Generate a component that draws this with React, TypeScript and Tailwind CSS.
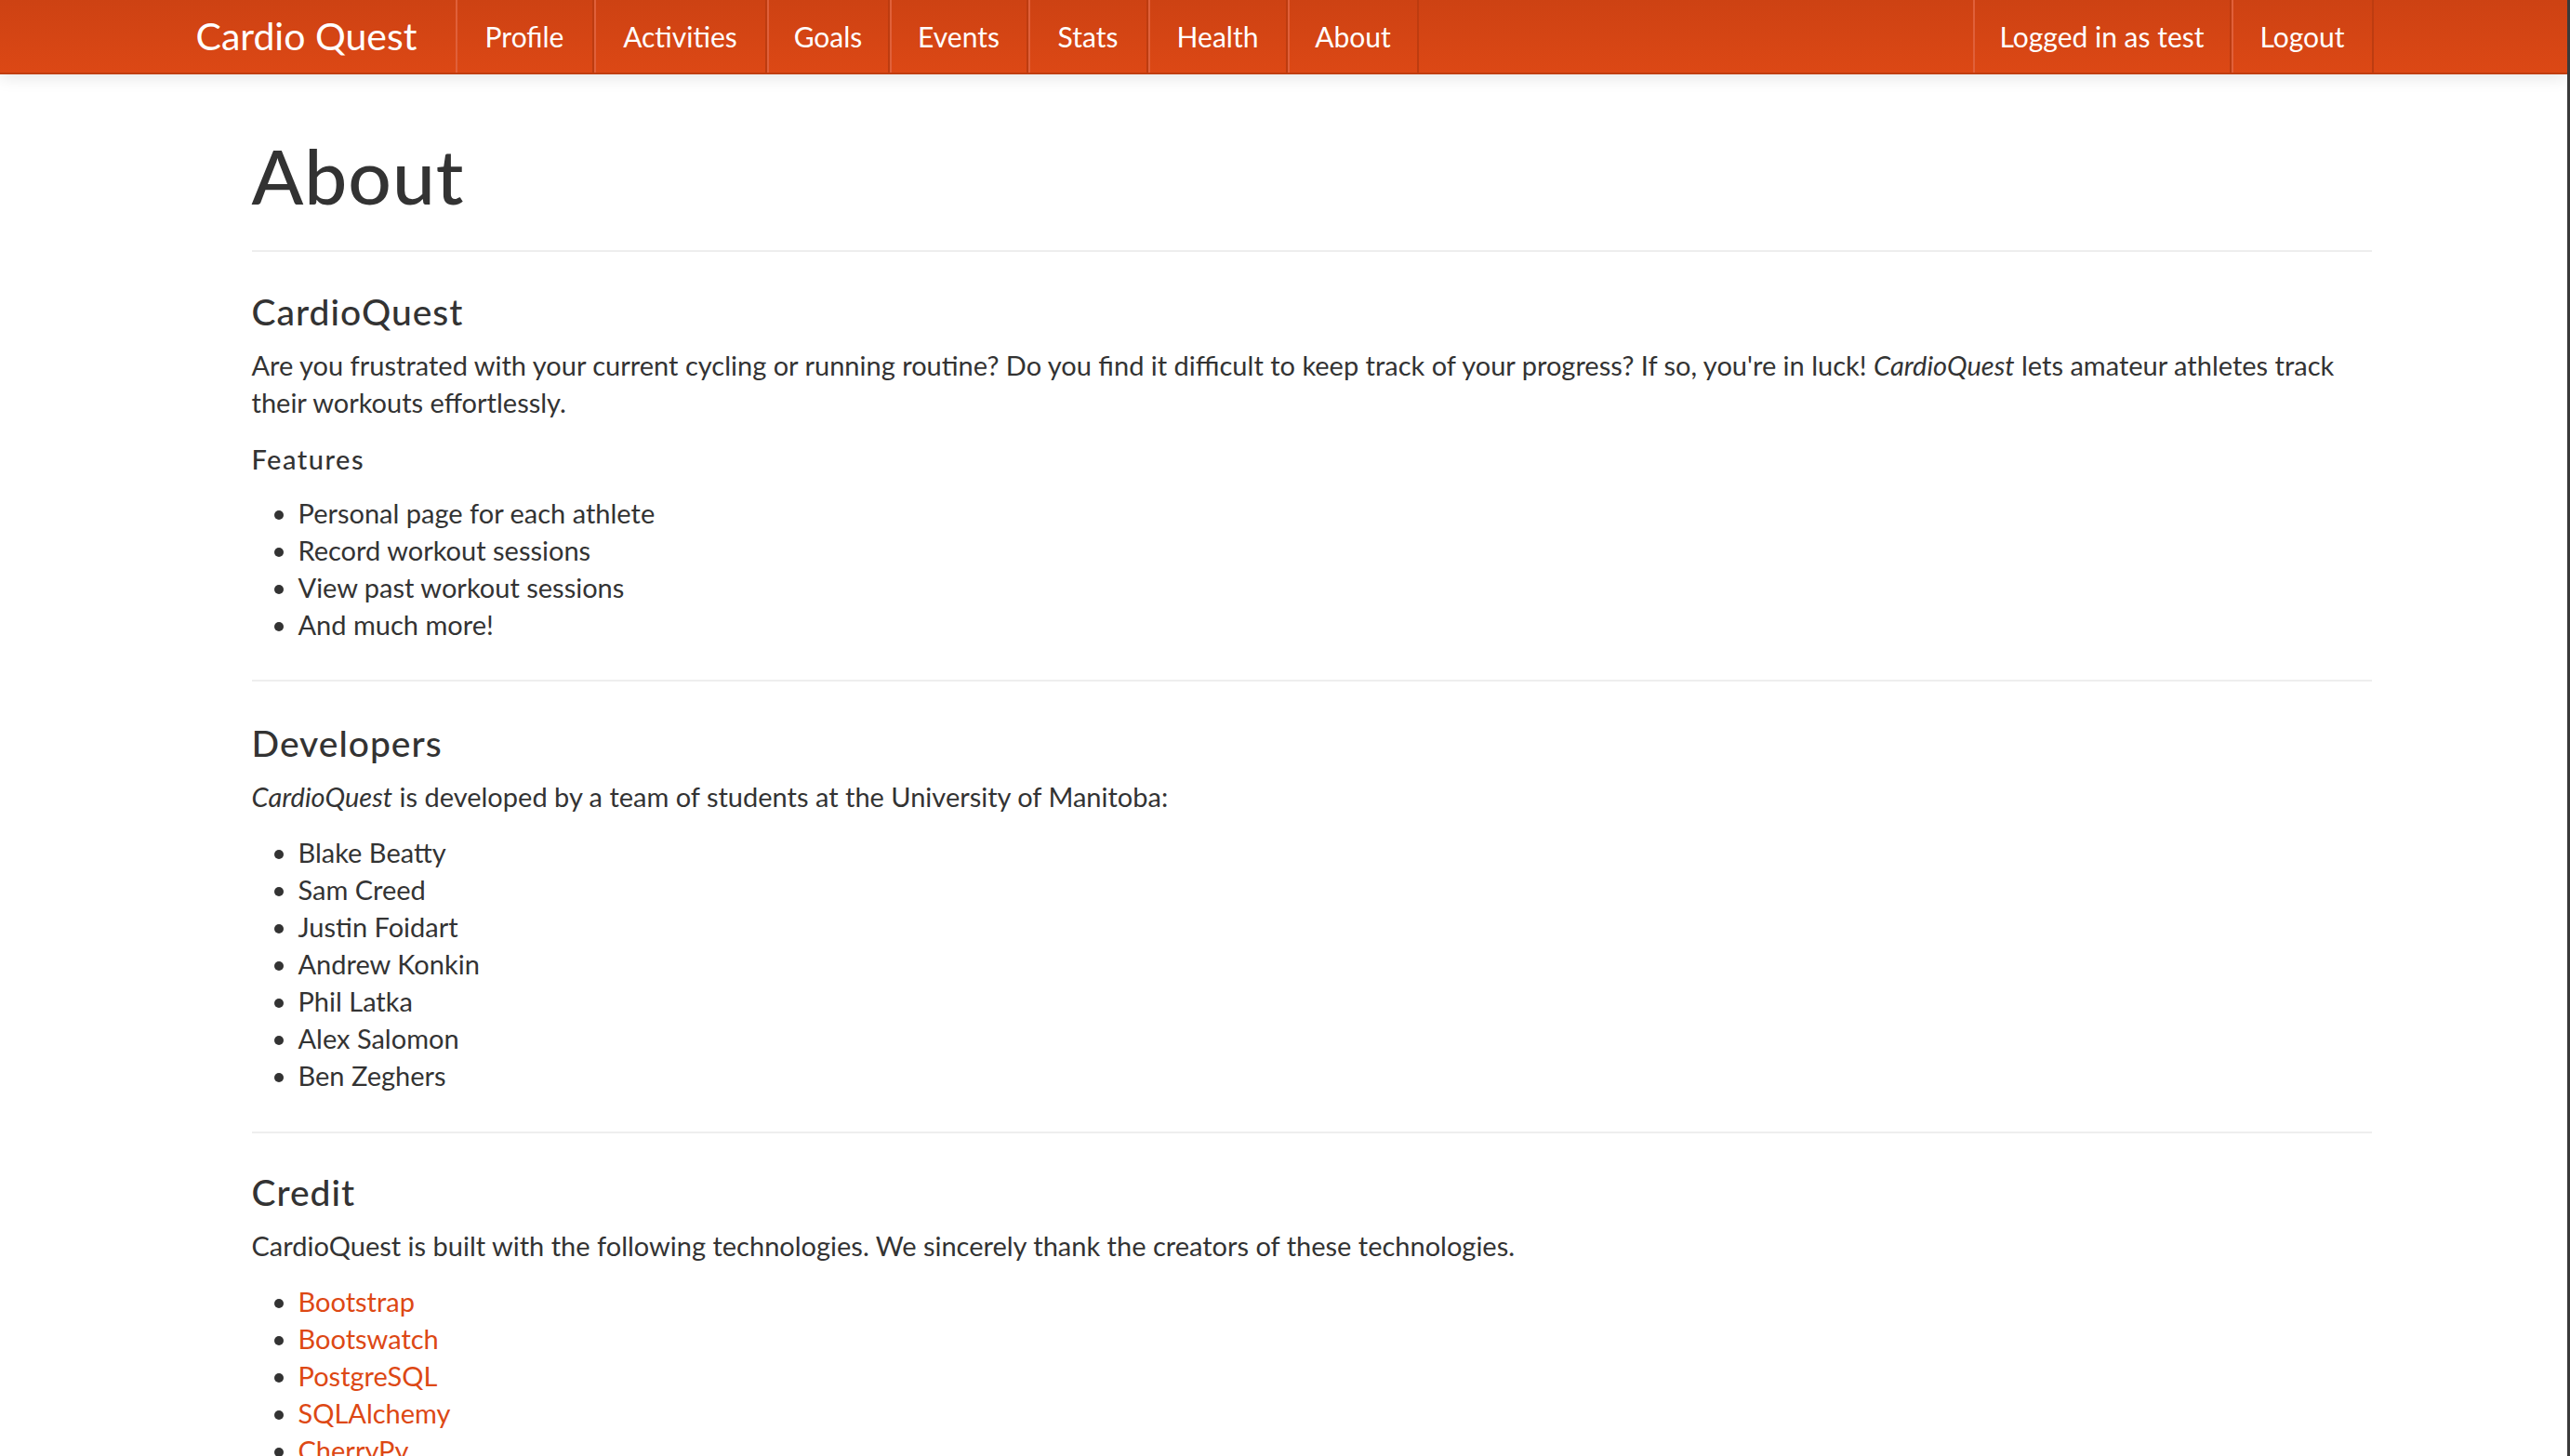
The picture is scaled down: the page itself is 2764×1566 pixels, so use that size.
const leftNav = [
  { label: "Profile", w: "w-[149px]" },
  { label: "Activities", w: "w-[186px]" },
  { label: "Goals", w: "w-[132px]" },
  { label: "Events", w: "w-[149px]" },
  { label: "Stats", w: "w-[129px]" },
  { label: "Health", w: "w-[150px]" },
  { label: "About", w: "w-[141px]" },
];

const rightNav = [
  { label: "Logged in as test", w: "w-[278px]" },
  { label: "Logout", w: "w-[153px]" },
];

const features = [
  "Personal page for each athlete",
  "Record workout sessions",
  "View past workout sessions",
  "And much more!",
];

const developers = [
  "Blake Beatty",
  "Sam Creed",
  "Justin Foidart",
  "Andrew Konkin",
  "Phil Latka",
  "Alex Salomon",
  "Ben Zeghers",
];

const credits = ["Bootstrap", "Bootswatch", "PostgreSQL", "SQLAlchemy", "CherryPy", "Jinja2"];

const NavItem = ({ label, w }: { label: string; w: string }) => (
  <li className={`${w} flex items-center justify-center border-l-2 border-r-2 border-l-[#e0603a] border-r-[#bd3c10]`}>
    <a href="#" className="text-[30px] text-white">
      {label}
    </a>
  </li>
);

const App = () => {
  return (
    <div className="min-h-screen bg-white font-[Lato,sans-serif] text-[#333333] border-r-[3px] border-[#3a3a3a] overflow-hidden">
      <header className="h-20 bg-linear-to-b from-[#cd4213] to-[#dc4815] border-b-2 border-[#c03e10] shadow-[0_2px_18px_rgba(0,0,0,0.12)]">
        <nav className="w-[2340px] mx-auto h-full flex">
          <a href="#" className="w-[279px] flex items-center text-[41px] text-white">
            Cardio Quest
          </a>
          <ul className="flex -mr-[2px]">
            {leftNav.map((item) => (
              <NavItem key={item.label} {...item} />
            ))}
          </ul>
          <ul className="ml-auto flex -mr-[2px]">
            {rightNav.map((item) => (
              <NavItem key={item.label} {...item} />
            ))}
          </ul>
        </nav>
      </header>

      <main className="w-[2340px] mx-auto pl-[60px] text-[29px] leading-[40px]">
        <div className="pt-[68px] pb-[41px] border-b-2 border-[#eeeeee]">
          <h1 className="text-[82px] leading-[80px] font-medium tracking-[1px]">About</h1>
        </div>

        <section className="pt-[44px] pb-[39px] border-b-2 border-[#eeeeee]">
          <h3 className="text-[39px] leading-[40px] font-medium tracking-[1px]">CardioQuest</h3>
          <p className="mt-[18px]">
            Are you frustrated with your current cycling or running routine? Do you find it difficult to keep track
            of your progress? If so, you're in luck! <em>CardioQuest</em> lets amateur athletes track their workouts
            effortlessly.
          </p>
          <h5 className="mt-[21px] font-medium tracking-[1.5px]">Features</h5>
          <ul className="mt-[18px] list-disc pl-[50px]">
            {features.map((f) => (
              <li key={f}>{f}</li>
            ))}
          </ul>
        </section>

        <section className="pt-[46px] pb-[40px] border-b-2 border-[#eeeeee]">
          <h3 className="text-[39px] leading-[40px] font-medium tracking-[1px]">Developers</h3>
          <p className="mt-[18px]">
            <em>CardioQuest</em> is developed by a team of students at the University of Manitoba:
          </p>
          <ul className="mt-[20px] list-disc pl-[50px]">
            {developers.map((d) => (
              <li key={d}>{d}</li>
            ))}
          </ul>
        </section>

        <section className="pt-[43px] pb-[40px]">
          <h3 className="text-[39px] leading-[40px] font-medium tracking-[1px]">Credit</h3>
          <p className="mt-[18px]">
            CardioQuest is built with the following technologies. We sincerely thank the creators of these
            technologies.
          </p>
          <ul className="mt-[20px] list-disc pl-[50px]">
            {credits.map((c) => (
              <li key={c}>
                <a href="#" className="text-[#dd4814]">
                  {c}
                </a>
              </li>
            ))}
          </ul>
        </section>
      </main>
    </div>
  );
};

export default App;
